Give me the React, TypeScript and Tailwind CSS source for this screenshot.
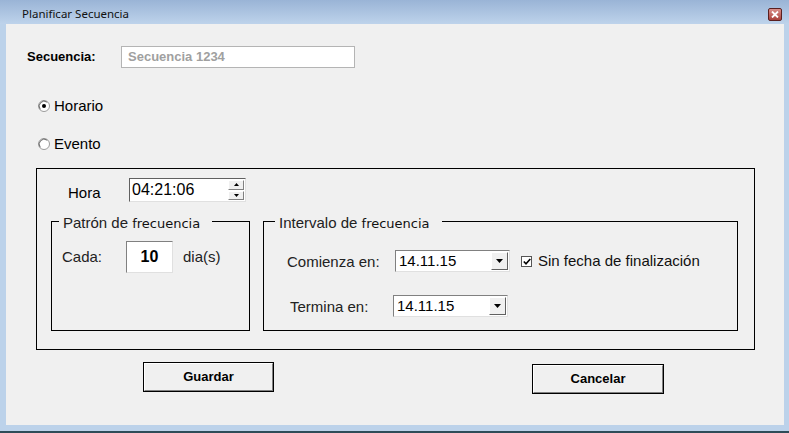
import React from 'react';

const arial = { fontFamily: '"Liberation Sans", Arial, sans-serif' };

const Radio: React.FC<{ checked?: boolean }> = ({ checked }) => (
  <svg width="12" height="12" viewBox="0 0 12 12" className="shrink-0">
    <circle cx="6" cy="6" r="5.5" fill="#fff" stroke="#9a9a9a" />
    <path d="M2.2 9.2 A5 5 0 0 1 9.2 2.2" fill="none" stroke="#6a6a6a" strokeWidth="1" />
    {checked && <circle cx="6" cy="6" r="2" fill="#000" />}
  </svg>
);

const Dropdown: React.FC<{ value: string; width: string }> = ({ value, width }) => (
  <div className={`${width} h-[22px] flex bg-white border border-t-[#808080] border-l-[#808080] border-b-[#e0e0e0] border-r-[#e0e0e0]`}>
    <div className="flex-1 flex items-center pl-[3px] text-[15px] text-black">{value}</div>
    <div className="w-[17px] m-[1px] flex items-center justify-center bg-[#f0f0f0] border border-t-white border-l-white border-b-[#606060] border-r-[#606060]">
      <svg width="7" height="4" viewBox="0 0 7 4"><path d="M0 0h7L3.5 4z" fill="#000" /></svg>
    </div>
  </div>
);

const Group: React.FC<{ title: string; ml: string; className: string; children: React.ReactNode }> = ({ title, ml, className, children }) => (
  <div className={`relative border border-black ${className}`}>
    <div className={`absolute -top-[10px] ${ml} px-[4px] pr-[12px] bg-[#f0f0f0] flex items-baseline h-[18px] text-[15px] text-[#222]`}>
      <span>{title}&nbsp;</span>
      <span className="text-[#111]" style={{ fontFamily: '"DejaVu Sans", Tahoma, sans-serif', fontSize: '13px' }}>frecuencia</span>
    </div>
    {children}
  </div>
);

const Button: React.FC<{ label: string; className?: string }> = ({ label, className }) => (
  <div className={`w-[131px] h-[30px] border border-black bg-[#f0f0f0] ${className ?? ''}`}>
    <div className="w-full h-full flex items-center justify-center border border-t-white border-l-white border-b-[#808080] border-r-[#808080] text-[13px] font-bold text-black">
      {label}
    </div>
  </div>
);

export default function App() {
  return (
    <div className="w-[789px] h-[433px] flex flex-col bg-[#bcd2ea] overflow-hidden" style={arial}>
      {/* title bar */}
      <div className="h-[24px] flex items-center bg-gradient-to-b from-[#9ab4d6] to-[#bed3eb] pl-[22px] pr-[7px]">
        <span className="flex-1 text-[11.5px] text-[#111] pt-[4px]" style={{ fontFamily: '"Noto Sans", sans-serif' }}>
          Planificar Secuencia
        </span>
        <div className="w-[14px] h-[13px] mt-[4px] rounded-[2px] border border-[#5a1f1f] bg-gradient-to-b from-[#d9908c] to-[#a8403b] flex items-center justify-center">
          <svg width="8" height="7" viewBox="0 0 8 7">
            <path d="M1 0.5l6 6M7 0.5l-6 6" stroke="#fff" strokeWidth="1.8" />
          </svg>
        </div>
      </div>

      {/* body */}
      <div className="flex-1 flex ml-[6px] mr-[5px]">
        <div className="flex-1 h-[401px] bg-[#f0f0f0] flex flex-col pt-[22px] text-black">
          <div className="flex items-center h-[22px]">
            <span className="ml-[21px] w-[94px] text-[13px] font-bold">Secuencia:</span>
            <div className="w-[234px] h-[22px] bg-white border border-[#b4b4b4] flex items-center pl-[6px] text-[13px] font-bold text-[#a0a0a0]">
              Secuencia 1234
            </div>
          </div>

          <div className="flex items-center gap-[4px] h-[18px] mt-[29px] ml-[32px] text-[15px]">
            <Radio checked />
            <span>Horario</span>
          </div>
          <div className="flex items-center gap-[4px] h-[18px] mt-[20px] ml-[32px] text-[15px]">
            <Radio />
            <span>Evento</span>
          </div>

          {/* main panel */}
          <div className="ml-[30px] mt-[15px] w-[719px] h-[182px] border border-black flex flex-col">
            <div className="flex items-center h-[24px] mt-[9px]">
              <span className="ml-[31px] w-[61px] text-[15px] pt-[6px]">Hora</span>
              <div className="w-[117px] h-[24px] flex bg-white border border-t-[#606060] border-l-[#606060] border-b-[#e0e0e0] border-r-[#e0e0e0]">
                <div className="flex-1 flex items-center pl-[2px] text-[16px]">04:21:06</div>
                <div className="w-[16px] flex flex-col m-[1px] gap-[1px]">
                  <div className="flex-1 flex items-center justify-center bg-[#f0f0f0] border border-t-white border-l-white border-b-[#808080] border-r-[#808080]">
                    <svg width="5" height="3" viewBox="0 0 5 3"><path d="M0 3h5L2.5 0z" fill="#000" /></svg>
                  </div>
                  <div className="flex-1 flex items-center justify-center bg-[#f0f0f0] border border-t-white border-l-white border-b-[#808080] border-r-[#808080]">
                    <svg width="5" height="3" viewBox="0 0 5 3"><path d="M0 0h5L2.5 3z" fill="#000" /></svg>
                  </div>
                </div>
              </div>
            </div>

            <div className="flex mt-[19px] ml-[14px] gap-[13px]">
              <Group title="Patrón de" ml="left-[7px]" className="w-[199px] h-[110px]">
                <div className="flex items-center mt-[19px] ml-[10px]">
                  <span className="w-[64px] text-[15px] text-[#222]">Cada:</span>
                  <div className="w-[47px] h-[32px] bg-white border border-t-[#808080] border-l-[#808080] border-b-[#e0e0e0] border-r-[#e0e0e0] flex items-start justify-center pt-[3px] text-[16px] font-bold">
                    10
                  </div>
                  <span className="ml-[10px] text-[15px] text-[#222]">dia(s)</span>
                </div>
              </Group>

              <Group title="Intervalo de" ml="left-[11px]" className="w-[475px] h-[110px]">
                <div className="flex items-center mt-[28px] ml-[23px] h-[22px]">
                  <span className="w-[108px] text-[15px] text-[#222] pt-[2px]">Comienza en:</span>
                  <Dropdown value="14.11.15" width="w-[115px]" />
                  <div className="ml-[11px] w-[11px] h-[11px] bg-white border border-[#555] flex items-center justify-center">
                    <svg width="8" height="7" viewBox="0 0 8 7"><path d="M0.8 3.5l2.2 2.3 4.3-4.8" fill="none" stroke="#000" strokeWidth="1.6" /></svg>
                  </div>
                  <span className="ml-[6px] text-[15px] text-[#111]">Sin fecha de finalización</span>
                </div>
                <div className="flex items-center mt-[23px] ml-[26px] h-[22px]">
                  <span className="w-[103px] text-[15px] text-[#222] pt-[3px]">Termina en:</span>
                  <Dropdown value="14.11.15" width="w-[115px]" />
                </div>
              </Group>
            </div>
          </div>

          <div className="flex items-start mt-[12px]">
            <Button label="Guardar" className="ml-[137px]" />
            <Button label="Cancelar" className="ml-[258px] mt-[2px] w-[132px]" />
          </div>
        </div>
      </div>
      <div className="h-[6px] bg-[#bcd2ea]" />
      <div className="h-[2px] bg-[#2e4c58]" />
    </div>
  );
}
